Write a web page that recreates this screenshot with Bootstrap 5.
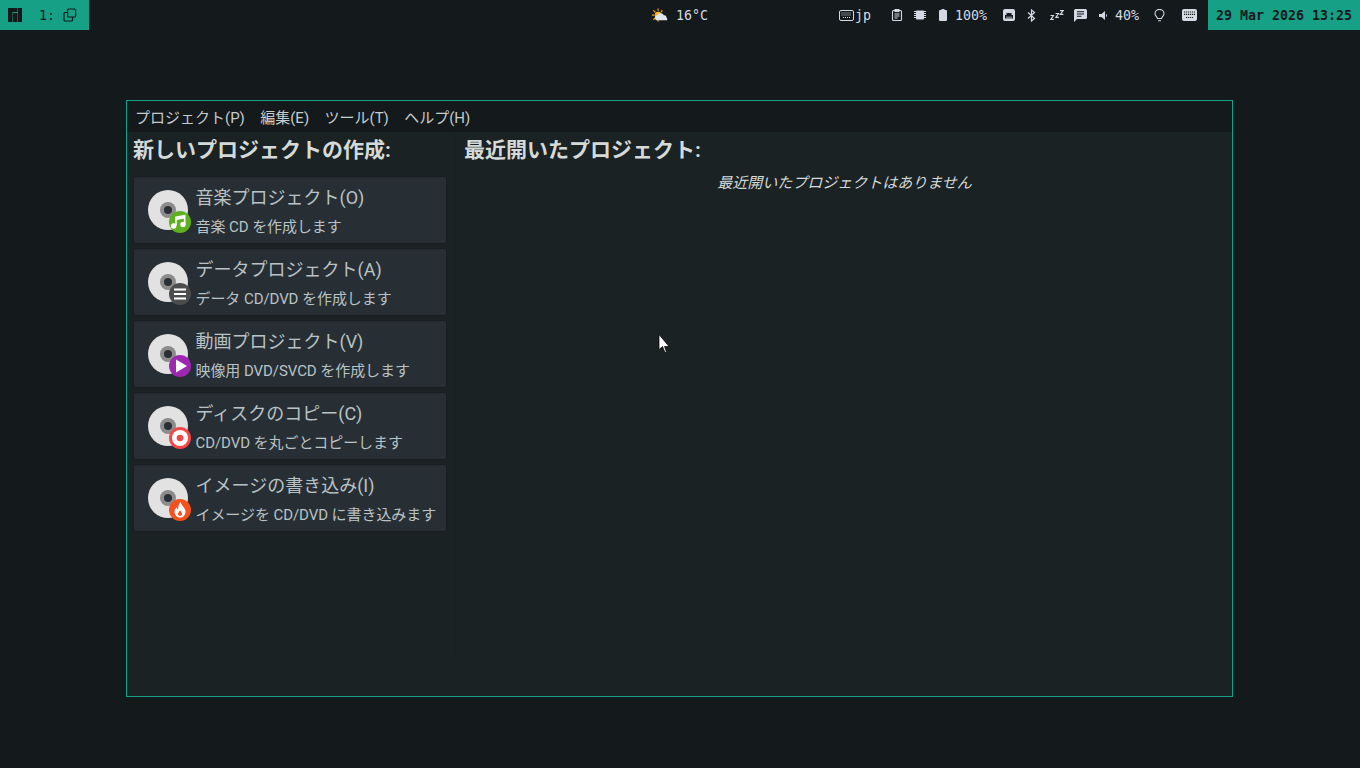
<!DOCTYPE html>
<html lang="ja">
<head>
<meta charset="utf-8">
<title>Brasero</title>
<link href="https://cdn.jsdelivr.net/npm/bootstrap@5.3.0/dist/css/bootstrap.min.css" rel="stylesheet">
<style>
html,body{height:768px;overflow:hidden}
body{background:#14191c;color:#d3dae3;font-family:Roboto,"Noto Sans CJK JP",sans-serif;position:relative}
.topbar{height:30px;background:#14191c;font-family:"DejaVu Sans Mono",monospace;font-size:13.3px;color:#d3dae3;line-height:30px;position:relative}
.topbar span{padding-top:2px}
.tb-teal{background:#16a085;color:#14191c;height:30px}
.tb-left{width:89px;padding-left:8px}
.tb-right{width:152px;padding-left:8px;font-weight:700;white-space:nowrap;margin-left:11px;line-height:32px}
.tb-center{position:absolute;left:652px;top:0;height:30px}
.tb-status{margin-left:auto;height:30px;white-space:nowrap}
.tb-status>*{flex:none}
.app-window{position:absolute;left:126px;top:100px;width:1107px;height:597px;border:1px solid #16a085;background:#1b2224;display:flex;flex-direction:column}
.menu-strip{height:31px;background:#14191c;font-size:15px;line-height:34px;padding-left:8px;color:#c4ccce;gap:15.4px;flex:none}
.panes{flex:1;min-height:0}
.pane-left{width:328px;padding:0 0 0 6px;flex:none;position:relative}
.pane-left::after{content:"";position:absolute;left:328px;top:0;height:525px;width:1px;background:#192022}
.pane-head{font-size:21px;font-weight:700;color:#d3dad8;line-height:36px;height:44px;white-space:nowrap}
.proj-item{width:314px;height:68px;background:#272f35;border:1px solid #171d20;border-radius:3px;margin-bottom:4px;position:relative;padding-left:61.500px;white-space:nowrap}
.proj-icon{position:absolute;left:14px;top:12px;width:44px;height:44px;margin-top:1px}
.proj-title{font-size:18px;line-height:24px;margin-top:9px;color:#b9c2c4}
.proj-sub{font-size:15px;line-height:20px;margin-top:7px;color:#b9c2c4;letter-spacing:-.07px}
.pane-right{flex:1;padding-left:9px;position:relative}
.empty-note{font-size:15px;font-style:italic;color:#d3dad8;text-align:center;position:absolute;left:0;right:0;top:41px;line-height:20px;margin-left:2px}
.pointer{position:absolute;left:658px;top:334px}
</style>
</head>
<body>
<div class="topbar d-flex">
  <div class="tb-teal tb-left d-flex align-items-center">
    <svg width="14" height="14" viewBox="0 0 14 14" fill="#14191c"><path d="M0 0h9.500v4h-5v10H0zM5 5h4.500v9H5zM10 0h4v14h-4z"/></svg>
    <span style="margin-left:17px">1:</span>
    <svg style="margin-left:8px" width="14" height="14" viewBox="0 0 14 14" fill="none" stroke="#14191c" stroke-width="1.200"><rect x="4.600" y="1" width="8" height="8" rx="1"/><path d="M4.600 4.500H2a1 1 0 0 0-1 1V12a1 1 0 0 0 1 1h6.500a1 1 0 0 0 1-1V9"/></svg>
  </div>
  <div class="tb-center d-flex align-items-center">
    <svg width="16" height="17" viewBox="0 0 17 17"><g stroke="#f5a623" stroke-width="1.300"><path d="M6.500 1v2.500M1.500 3l2 2M0 8h2.500M1.500 13l2-2M6.500 15v-2M11 3l-1.500 2"/></g><circle cx="6.500" cy="8" r="3.600" fill="#f7b731"/><path d="M5 13.500a2.500 2.500 0 0 1 .6-4.900 3.800 3.800 0 0 1 7-.3 2.700 2.700 0 0 1 2.900 2.600 2.300 2.300 0 0 1 .6 2.600z" fill="#dfe6ea"/></svg>
    <span style="margin-left:8px">16°C</span>
  </div>
  <div class="tb-status d-flex align-items-center">
    <svg width="15" height="11" viewBox="0 0 15 11" fill="none" stroke="#d3dae3"><rect x=".5" y=".5" width="14" height="10" rx="1.500"/><path d="M2.500 3h10M2.500 5h10M4 7.500h7" stroke-dasharray="1 1"/></svg>
    <span style="margin-left:1px;width:16px">jp</span>
    <svg style="margin-left:20px" width="12" height="12" viewBox="0 0 12 12" fill="none" stroke="#d3dae3" stroke-width="1.100"><rect x="1.500" y="1.500" width="9" height="10" rx="1"/><rect x="4" y=".5" width="4" height="2" fill="#d3dae3"/><path d="M3.500 5h5M3.500 7h5M3.500 9h3"/></svg>
    <svg style="margin-left:11px" width="12" height="12" viewBox="0 0 12 12" fill="#d3dae3"><rect x="2" y="1.500" width="8" height="9" rx="1"/><path d="M0 2.500h12M0 4.500h12M0 6.500h12M0 8.500h12" stroke="#d3dae3"/></svg>
    <svg style="margin-left:13px" width="8" height="12" viewBox="0 0 8 12" fill="#d3dae3"><path d="M2.500 0h3v1H7a1 1 0 0 1 1 1v9a1 1 0 0 1-1 1H1a1 1 0 0 1-1-1V2a1 1 0 0 1 1-1h1.500z"/></svg>
    <span style="margin-left:8px;width:32px">100%</span>
    <svg style="margin-left:16px" width="12" height="12" viewBox="0 0 12 12"><rect width="12" height="12" rx="2" fill="#d3dae3"/><path d="M2 9.500V6h1.500V4h5v2H10v3.500z" fill="#14191c"/><path d="M4 9.500v-2M6 9.500v-2M8 9.500v-2" stroke="#d3dae3"/></svg>
    <svg style="margin-left:12px" width="9" height="13" viewBox="0 0 9 13" fill="none" stroke="#d3dae3" stroke-width="1.200"><path d="M1 3.500l6.500 6L4.500 12V1l3 2.500L1 9.500"/></svg>
    <svg style="margin-left:14px" width="14" height="10" viewBox="0 0 14 10" fill="none" stroke="#d3dae3" stroke-width="1.100"><path d="M.5 5.500h3L.8 9.400h3M5.500 3.500h3L5.800 7.400h3M10 .6h3.200l-3 3.800h3.200"/></svg>
    <svg style="margin-left:10px" width="13" height="13" viewBox="0 0 13 13"><path d="M1.500 0h10A1.500 1.500 0 0 1 13 1.500v7a1.500 1.500 0 0 1-1.500 1.500H3l-3 3V1.500A1.500 1.500 0 0 1 1.500 0z" fill="#d3dae3"/><path d="M3 2.800h7M3 5h7M3 7.200h4.500" stroke="#14191c" stroke-width="1.100"/></svg>
    <svg style="margin-left:12px" width="9" height="9" viewBox="0 0 9 9" fill="#d3dae3"><path d="M0 3h2.500L6 0v9L2.500 6H0z"/><path d="M7 2.800a2 2 0 0 1 0 3.400z"/></svg>
    <span style="margin-left:7px;width:24px">40%</span>
    <svg style="margin-left:15px" width="11" height="13" viewBox="0 0 11 13" fill="none" stroke="#d3dae3" stroke-width="1.100"><path d="M3.500 9.500C3.300 8 1 7 1 4.700a4.500 4.300 0 0 1 9 0C10 7 7.700 8 7.500 9.500zM4 11.800h3"/></svg>
    <svg style="margin-left:17px" width="15" height="12" viewBox="0 0 15 12"><rect width="15" height="12" rx="2" fill="#d3dae3"/><path d="M2 3h11M2 5.300h11M4 8.500h7" stroke="#14191c" stroke-dasharray="1.200 .8" stroke-width="1.200"/></svg>
    <div class="tb-teal tb-right">29 Mar 2026 13:25</div>
  </div>
</div>

<div class="app-window">
  <div class="menu-strip d-flex">
    <span>プロジェクト(P)</span><span>編集(E)</span><span>ツール(T)</span><span>ヘルプ(H)</span>
  </div>
  <div class="panes d-flex">
    <div class="pane-left">
      <div class="pane-head">新しいプロジェクトの作成:</div>
      <div class="proj-item">
        <svg class="proj-icon" viewBox="0 0 44 44"><circle cx="20" cy="20" r="20" fill="#e2e2e2"/><circle cx="20" cy="20" r="8" fill="#8c8c8c"/><circle cx="20" cy="20" r="4" fill="#2a3136"/><circle cx="32" cy="32" r="11" fill="#5fb01e"/><path d="M28 35.500V27.200l8.700-1.500v8" fill="none" stroke="#fff" stroke-width="1.600"/><path d="M27.200 27.200l9.500-1.700v3l-9.500 1.700z" fill="#fff"/><circle cx="25.700" cy="36" r="2.700" fill="#fff"/><circle cx="35" cy="34.500" r="2.700" fill="#fff"/></svg>
        <div class="proj-title">音楽プロジェクト(O)</div>
        <div class="proj-sub">音楽 CD を作成します</div>
      </div>
      <div class="proj-item">
        <svg class="proj-icon" viewBox="0 0 44 44"><circle cx="20" cy="20" r="20" fill="#e2e2e2"/><circle cx="20" cy="20" r="8" fill="#8c8c8c"/><circle cx="20" cy="20" r="4" fill="#2a3136"/><circle cx="32" cy="32" r="11" fill="#4d4d4d"/><path d="M26 27.500h12M26 32h12M26 36.500h12" stroke="#fff" stroke-width="2"/></svg>
        <div class="proj-title">データプロジェクト(A)</div>
        <div class="proj-sub">データ CD/DVD を作成します</div>
      </div>
      <div class="proj-item">
        <svg class="proj-icon" viewBox="0 0 44 44"><circle cx="20" cy="20" r="20" fill="#e2e2e2"/><circle cx="20" cy="20" r="8" fill="#8c8c8c"/><circle cx="20" cy="20" r="4" fill="#2a3136"/><circle cx="32" cy="32" r="11" fill="#9c27b0"/><path d="M28 25.500l11 6.500-11 6.500z" fill="#fff"/></svg>
        <div class="proj-title">動画プロジェクト(V)</div>
        <div class="proj-sub">映像用 DVD/SVCD を作成します</div>
      </div>
      <div class="proj-item">
        <svg class="proj-icon" viewBox="0 0 44 44"><circle cx="20" cy="20" r="20" fill="#e2e2e2"/><circle cx="20" cy="20" r="8" fill="#8c8c8c"/><circle cx="20" cy="20" r="4" fill="#2a3136"/><circle cx="32" cy="32" r="11" fill="#f44648"/><circle cx="32" cy="32" r="8" fill="#fff"/><circle cx="32" cy="32" r="3.300" fill="#f44648"/></svg>
        <div class="proj-title">ディスクのコピー(C)</div>
        <div class="proj-sub">CD/DVD を丸ごとコピーします</div>
      </div>
      <div class="proj-item">
        <svg class="proj-icon" viewBox="0 0 44 44"><circle cx="20" cy="20" r="20" fill="#e2e2e2"/><circle cx="20" cy="20" r="8" fill="#8c8c8c"/><circle cx="20" cy="20" r="4" fill="#2a3136"/><circle cx="32" cy="32" r="11" fill="#f4511e"/><path d="M32.500 24c.6 3.500 5 5.500 5 10a5.500 5.500 0 0 1-11 0c0-2.300 1.200-3.800 2.200-4.800.2 1.300.7 2 1.500 2.500-.3-3 .5-5.700 2.300-7.700zM32 32.500c-1 1.200-2 2.200-2 3.500a2 2 0 0 0 4 0c0-1.300-1-2.300-2-3.500z" fill="#fff" fill-rule="evenodd"/></svg>
        <div class="proj-title">イメージの書き込み(I)</div>
        <div class="proj-sub">イメージを CD/DVD に書き込みます</div>
      </div>
    </div>
    <div class="pane-right">
      <div class="pane-head">最近開いたプロジェクト:</div>
      <div class="empty-note">最近開いたプロジェクトはありません</div>
    </div>
  </div>
</div>

<svg class="pointer" width="12" height="20" viewBox="0 0 12 20"><path d="M1 .5v15l3.500-3 2.500 6 1.500-.6-2-5.400H11z" fill="#fff" stroke="#000" stroke-width=".7"/></svg>
</body>
</html>
